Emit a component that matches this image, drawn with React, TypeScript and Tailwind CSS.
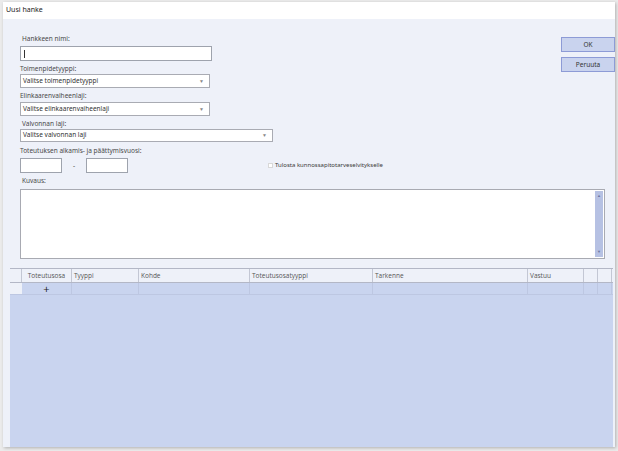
const font = { fontFamily: '"Noto Sans", "Liberation Sans", Arial, sans-serif' };

function Label({ children, mt, indent = true }: { children: React.ReactNode; mt: string; indent?: boolean }) {
  return (
    <div className={`${mt} h-[9px] text-[6.5px] leading-[9px] text-[#4a4a4a] ${indent ? 'pl-[2px]' : ''}`}>
      {children}
    </div>
  );
}

function Select({ text, width, mt, h = 'h-[14px]' }: { text: string; width: string; mt: string; h?: string }) {
  return (
    <div
      className={`${mt} ${width} ${h} flex items-center justify-between border border-[#a9abb3] bg-white pl-[2px] pr-[5px]`}
    >
      <span className="text-[6.5px] leading-none text-[#333]">{text}</span>
      <span className="text-[5px] leading-none text-[#888]">▼</span>
    </div>
  );
}

const columns = [
  { name: 'Toteutusosa', w: 'w-[50px]', center: true },
  { name: 'Tyyppi', w: 'w-[67px]' },
  { name: 'Kohde', w: 'w-[111px]' },
  { name: 'Toteutusosatyyppi', w: 'w-[123px]' },
  { name: 'Tarkenne', w: 'w-[155px]' },
  { name: 'Vastuu', w: 'w-[56px]' },
  { name: '', w: 'w-[14px]' },
  { name: '', w: 'w-[14px]' },
];

export default function App() {
  return (
    <div className="w-[618px] h-[451px] bg-[#ebebeb] pt-[2px] pl-[3px] pr-[3px] pb-[4px]" style={font}>
      <div className="flex h-full flex-col shadow-[1px_1px_3px_rgba(0,0,0,0.25)]">
        <div className="flex h-[17px] items-center bg-white pl-[3px] text-[7px] text-[#222]">Uusi hanke</div>

        <div className="flex flex-1 flex-col bg-[#eef1f9]">
          <div className="flex">
            <div className="flex flex-1 flex-col pl-[17px] pt-[15px]">
              <Label mt="mt-0">Hankkeen nimi:</Label>
              <div className="mt-[3px] flex h-[15px] w-[192px] items-center border border-[#9ea3ad] bg-white pl-[3px]">
                <div className="h-[8px] w-px bg-[#333]" />
              </div>

              <Label mt="mt-[3px]" indent={false}>Toimenpidetyyppi:</Label>
              <Select mt="mt-px" width="w-[190px]" text="Valitse toimenpidetyyppi" />

              <Label mt="mt-[3px]" indent={false}>Elinkaarenvaiheenlaji:</Label>
              <Select mt="mt-[2px]" width="w-[190px]" text="Valitse elinkaarenvaiheenlaji" />

              <Label mt="mt-[3px]">Valvonnan laji:</Label>
              <Select mt="mt-px" width="w-[253px]" h="h-[13px]" text="Valitse valvonnan laji" />

              <Label mt="mt-[4px]" indent={false}>Toteutuksen alkamis- ja päättymisvuosi:</Label>
              <div className="mt-[3px] flex h-[15px] items-center">
                <div className="h-[15px] w-[42px] border border-[#9ea3ad] bg-white" />
                <div className="w-[24px] text-center text-[6.5px] text-[#444]">-</div>
                <div className="h-[15px] w-[42px] border border-[#9ea3ad] bg-white" />
                <div className="ml-[140px] flex items-center gap-[2px]">
                  <div className="h-[5px] w-[5px] border border-[#d8d8d8] bg-white" />
                  <span className="text-[6px] text-[#3a3a3a]">Tulosta kunnossapitotarveselvitykselle</span>
                </div>
              </div>
            </div>

            <div className="flex w-[54px] flex-col gap-[5px] pt-[18px]">
              <div className="flex h-[15px] items-center justify-center border border-[#8d9bd6] bg-[#c9d3ee] text-[6.5px] text-[#333]">
                OK
              </div>
              <div className="flex h-[15px] items-center justify-center border border-[#8d9bd6] bg-[#c9d3ee] text-[6.5px] text-[#333]">
                Peruuta
              </div>
            </div>
          </div>

          <div className="flex flex-col pl-[17px] pr-[10px]">
            <Label mt="mt-[3px]">Kuvaus:</Label>
            <div className="mt-[4px] flex h-[70px] border border-[#a8aab2] bg-white">
              <div className="flex-1" />
              <div className="my-px mr-px flex w-[8px] flex-col items-center justify-between bg-[#b6c1e3] py-[3px] text-[4px] leading-none text-[#6c76a0]">
                <span>▲</span>
                <span>▼</span>
              </div>
            </div>
          </div>

          <div className="ml-[7px] mr-[2px] mt-[9px] flex flex-1 flex-col bg-[#c9d4ef]" style={{ fontFamily: '"Open Sans", "Noto Sans", sans-serif' }}>
            <div className="flex h-[15px] border-y border-[#b3b7c6] bg-[#eef1f9]">
              <div className="w-[12px] border-r border-[#c3c7d4]" />
              {columns.map((c, i) => (
                <div
                  key={i}
                  className={`${c.w} flex items-center border-r border-[#c3c7d4] text-[6.5px] text-[#555] ${c.center ? 'justify-center' : 'pl-[2px]'}`}
                >
                  {c.name}
                </div>
              ))}
            </div>
            <div className="flex h-[12px] border-b border-[#bdc7e2]">
              <div className="w-[12px] bg-[#eef1f9]" />
              {columns.map((c, i) => (
                <div key={i} className={`${c.w} flex items-center justify-center border-r border-[#bdc7e2] text-[11px] leading-none text-[#222]`}>
                  {i === 0 ? '+' : ''}
                </div>
              ))}
            </div>
            <div className="flex-1" />
          </div>
        </div>
      </div>
    </div>
  );
}
